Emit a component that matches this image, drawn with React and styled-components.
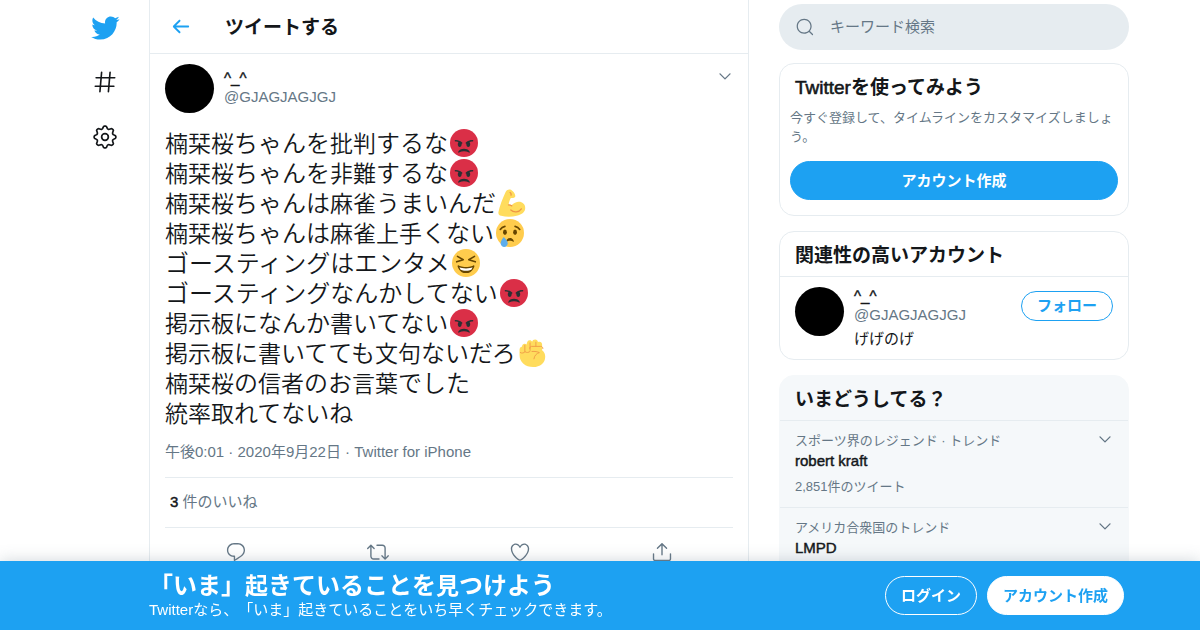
import React from "react";
import styled, { createGlobalStyle, css } from "styled-components";

const BLUE = "#1da1f2";
const INK = "#14171a";
const GREY = "#657786";
const LINE = "#e6ecf0";

const GlobalStyle = createGlobalStyle`
  *, *::before, *::after { box-sizing: border-box; }
  body {
    margin: 0;
    background: #fff;
    color: ${INK};
    font-family: "Liberation Sans", "Noto Sans CJK JP", sans-serif;
    font-size: 15px;
    line-height: 20px;
    text-spacing-trim: space-all;
  }
  h1, h2, p, ul { margin: 0; padding: 0; }
  ul { list-style: none; }
  button, input { font: inherit; }
  button { cursor: pointer; }
  a { color: inherit; text-decoration: none; }
`;

const strong = css`
  font-weight: 400;
  -webkit-text-stroke: 0.03em currentColor;
`;

/* ---------- icons ---------- */

const Svg = styled.svg`
  display: block;
  flex: none;
  width: ${(p) => p.$size}px;
  height: ${(p) => p.$size}px;
  fill: currentColor;
`;

const PATHS = {
  bird: "M23.643 4.937c-.835.37-1.732.62-2.675.733.962-.576 1.7-1.49 2.048-2.578-.9.534-1.897.922-2.958 1.13-.85-.904-2.06-1.47-3.4-1.47-2.572 0-4.658 2.086-4.658 4.66 0 .364.042.718.12 1.06-3.873-.195-7.304-2.05-9.602-4.868-.4.69-.63 1.49-.63 2.342 0 1.616.823 3.043 2.072 3.878-.764-.025-1.482-.234-2.11-.583v.06c0 2.257 1.605 4.14 3.737 4.568-.392.106-.803.162-1.227.162-.3 0-.593-.028-.877-.082.593 1.85 2.313 3.198 4.352 3.234-1.595 1.25-3.604 1.995-5.786 1.995-.376 0-.747-.022-1.112-.065 2.062 1.323 4.51 2.093 7.14 2.093 8.57 0 13.255-7.098 13.255-13.254 0-.2-.005-.402-.014-.602.91-.658 1.7-1.477 2.323-2.41z",
  back: "M20 11H7.414l4.293-4.293c.39-.39.39-1.023 0-1.414s-1.023-.39-1.414 0l-6 6c-.39.39-.39 1.023 0 1.414l6 6c.195.195.45.293.707.293s.512-.098.707-.293c.39-.39.39-1.023 0-1.414L7.414 13H20c.553 0 1-.447 1-1s-.447-1-1-1z",
  hash: "M21 7.337h-3.93l.372-4.272c.036-.412-.27-.775-.682-.812-.417-.03-.776.27-.812.683l-.383 4.4h-6.32l.37-4.27c.037-.413-.27-.776-.68-.813-.42-.03-.777.27-.813.683l-.382 4.4H3.782c-.414 0-.75.337-.75.75s.336.75.75.75H7.61l-.55 6.327H3c-.414 0-.75.336-.75.75s.336.75.75.75h3.93l-.372 4.272c-.036.412.27.775.682.812l.066.003c.385 0 .712-.295.746-.686l.383-4.4h6.32l-.37 4.27c-.036.413.27.776.682.813l.066.003c.385 0 .712-.295.746-.686l.382-4.4h3.957c.413 0 .75-.337.75-.75s-.337-.75-.75-.75H16.39l.55-6.327H21c.414 0 .75-.336.75-.75s-.336-.75-.75-.75zm-6.115 7.826h-6.32l.55-6.326h6.32l-.55 6.326z",
  reply: "M14.046 2.242l-4.148-.01h-.002c-4.374 0-7.8 3.427-7.8 7.802 0 4.098 3.186 7.206 7.465 7.37v3.828c0 .108.044.286.12.403.142.225.384.347.632.347.138 0 .277-.038.402-.118.264-.168 6.473-4.14 8.088-5.506 1.902-1.61 3.04-3.97 3.043-6.312v-.017c-.006-4.367-3.43-7.787-7.8-7.788zm3.787 12.972c-1.134.96-4.862 3.405-6.772 4.643V16.67c0-.414-.335-.75-.75-.75h-.396c-3.66 0-6.318-2.476-6.318-5.886 0-3.534 2.768-6.302 6.3-6.302l4.147.01h.002c3.532 0 6.3 2.766 6.302 6.296-.003 1.91-.942 3.844-2.514 5.176z",
  retweet: "M23.77 15.67c-.292-.293-.767-.293-1.06 0l-2.22 2.22V7.65c0-2.068-1.683-3.75-3.75-3.75h-5.85c-.414 0-.75.336-.75.75s.336.75.75.75h5.85c1.24 0 2.25 1.01 2.25 2.25v10.24l-2.22-2.22c-.293-.293-.768-.293-1.06 0s-.294.768 0 1.06l3.5 3.5c.145.147.337.22.53.22s.383-.072.53-.22l3.5-3.5c.294-.292.294-.767 0-1.06zm-10.66 3.28H7.26c-1.24 0-2.25-1.01-2.25-2.25V6.46l2.22 2.22c.148.147.34.22.532.22s.384-.073.53-.22c.293-.293.293-.768 0-1.06l-3.5-3.5c-.293-.294-.768-.294-1.06 0l-3.5 3.5c-.294.292-.294.767 0 1.06s.767.293 1.06 0l2.22-2.22V16.7c0 2.068 1.683 3.75 3.75 3.75h5.85c.414 0 .75-.336.75-.75s-.337-.75-.75-.75z",
  like: "M12 21.638h-.014C9.403 21.59 1.95 14.856 1.95 8.478c0-3.064 2.525-5.754 5.403-5.754 2.29 0 3.83 1.58 4.646 2.73.814-1.148 2.354-2.73 4.645-2.73 2.88 0 5.404 2.69 5.404 5.755 0 6.376-7.454 13.11-10.037 13.157H12zM7.354 4.225c-2.08 0-3.903 1.988-3.903 4.255 0 5.74 7.034 11.596 8.55 11.658 1.518-.062 8.55-5.917 8.55-11.658 0-2.267-1.823-4.255-3.903-4.255-2.528 0-3.94 2.936-3.952 2.965-.23.562-1.156.562-1.387 0-.014-.03-1.425-2.965-3.954-2.965z",
  share: "M17.53 7.47l-5-5c-.293-.293-.768-.293-1.06 0l-5 5c-.294.293-.294.768 0 1.06s.767.294 1.06 0l3.72-3.72V15c0 .414.336.75.75.75s.75-.336.75-.75V4.81l3.72 3.72c.146.147.338.22.53.22s.384-.072.53-.22c.293-.293.293-.767 0-1.06zM19.708 21.944H4.292C3.028 21.944 2 20.916 2 19.652V14c0-.414.336-.75.75-.75s.75.336.75.75v5.652c0 .437.355.792.792.792h15.416c.437 0 .792-.355.792-.792V14c0-.414.336-.75.75-.75s.75.336.75.75v5.652c0 1.264-1.028 2.292-2.292 2.292z",
  chevron: "M20.207 8.147c-.39-.39-1.023-.39-1.414 0L12 14.94 5.207 8.147c-.39-.39-1.023-.39-1.414 0-.39.39-.39 1.023 0 1.414l7.5 7.5c.195.196.45.294.707.294s.512-.098.707-.293l7.5-7.5c.39-.39.39-1.022 0-1.413z",
  search: "M21.53 20.47l-3.66-3.66C19.195 15.24 20 13.214 20 11c0-4.97-4.03-9-9-9s-9 4.03-9 9 4.03 9 9 9c2.215 0 4.24-.804 5.808-2.13l3.66 3.66c.147.146.34.22.53.22s.385-.073.53-.22c.295-.293.295-.767.002-1.06zM3.5 11c0-4.135 3.365-7.5 7.5-7.5s7.5 3.365 7.5 7.5-3.365 7.5-7.5 7.5-7.5-3.365-7.5-7.5z",
};

const Icon = ({ name, size }) => (
  <Svg viewBox="0 0 24 24" $size={size} aria-hidden="true">
    <path d={PATHS[name]} />
  </Svg>
);

const polar = (deg, r) => {
  const a = (deg * Math.PI) / 180;
  return `${(12 + r * Math.sin(a)).toFixed(2)} ${(12 - r * Math.cos(a)).toFixed(2)}`;
};

/* Eight rounded teeth, one every 45 degrees. */
const COG = Array.from({ length: 8 }, (_, i) => {
  const c = i * 45;
  return `${i ? "L" : "M"}${polar(c - 12, 8.7)}Q${polar(c - 9, 10)} ${polar(c - 4, 10)}L${polar(c + 4, 10)}Q${polar(c + 9, 10)} ${polar(c + 12, 8.7)}Q${polar(c + 22.5, 6.8)} ${polar(c + 33, 8.7)}`;
}).join("") + "Z";

const GearIcon = ({ size }) => (
  <Svg viewBox="0 0 24 24" $size={size} aria-hidden="true">
    <g fill="none" stroke="currentColor" strokeWidth="1.6" strokeLinejoin="round">
      <path d={COG} />
      <circle cx="12" cy="12" r="3.1" />
    </g>
  </Svg>
);

/* ---------- emoji ---------- */

const EmojiSvg = styled.svg`
  display: inline-block;
  width: 28px;
  height: 28px;
  margin: 0 2px;
  vertical-align: -5px;
`;

const EMOJI = {
  angry: (
    <>
      <circle cx="18" cy="18" r="18" fill="#DA2F47" />
      <path
        fill="#292F33"
        d="M25.485 29.879C25.44 29.7 24.317 25.5 18 25.5c-6.318 0-7.44 4.2-7.485 4.379-.055.217.043.442.237.554.195.109.439.079.6-.077.019-.019 1.954-1.856 6.648-1.856s6.63 1.837 6.648 1.855c.096.095.224.145.352.145.084 0 .169-.021.246-.064.196-.112.294-.339.239-.557zm-9.778-12.586C12.452 14.038 7.221 14 7 14c-.552 0-.999.447-.999.998-.001.552.446 1 .998 1.002.029 0 1.925.022 3.983.737-.593.64-.982 1.634-.982 2.763 0 1.934 1.119 3.5 2.5 3.5s2.5-1.566 2.5-3.5c0-.174-.019-.34-.037-.507.013 0 .025.007.037.007.256 0 .512-.098.707-.293.391-.391.391-1.023 0-1.414zM29 14c-.221 0-5.451.038-8.707 3.293-.391.391-.391 1.023 0 1.414.195.195.451.293.707.293.013 0 .024-.007.036-.007-.016.167-.036.333-.036.507 0 1.934 1.119 3.5 2.5 3.5s2.5-1.566 2.5-3.5c0-1.129-.389-2.123-.982-2.763 2.058-.715 3.954-.737 3.984-.737.551-.002.998-.45.997-1.002-.001-.551-.447-.998-.999-.998z"
      />
    </>
  ),
  muscle: (
    <>
      <path
        fill="#FFDC5D"
        d="M15.500.8C12.500.500 10.500 2 9.500 4.500 6 12 2 22 .500 30c-.2 2.500 1 4 3.500 4.500 6 1.500 14 1.500 20 0 7-1.500 11-5 11-10 0-5.500-4.500-8.500-9-8-3.500.500-6.500 2-8.500 4.500-1-.5-2.500-1-4-.5.500-3.500 1.500-6.500 3-9 2 .5 5 0 5.700-2 .6-2.500-3.200-8-6.700-8.700z"
      />
      <path fill="none" stroke="#EF9645" strokeWidth="1.600" strokeLinecap="round" d="M16.500 27c3.500 3.500 10.500 3.300 13.500-1.500M13.500 20.500c1.500-.1 2.900.3 4.200 1.200M15.500 4.500c1.300.8 1.700 1.900 1.200 3.500" />
    </>
  ),
  cry: (
    <>
      <circle cx="18" cy="18" r="18" fill="#FFCC4D" />
      <g fill="#664500">
        <ellipse cx="11.500" cy="17" rx="2.500" ry="3.500" />
        <ellipse cx="24.500" cy="17" rx="2.500" ry="3.500" />
        <path d="M13.100 28.700C13.200 28.200 14.200 24.500 18 24.500s4.800 3.700 4.900 4.200c.1.600-.5.900-.9.500-1-.9-2.200-1.200-4-1.200s-3 .3-4 1.200c-.4.400-1 .1-.9-.5z" />
      </g>
      <path fill="none" stroke="#664500" strokeWidth="2" strokeLinecap="round" d="M5.500 13.500c1.300-2.200 3.300-3.600 6-4M30.500 13.500c-1.300-2.200-3.300-3.600-6-4" />
      <path fill="#5DADEC" d="M10 23c-2.500 3-4 5.500-4 8.300C6 34 7.800 36 10.500 36S15 34 15 31.300C15 28.500 13 26 10 23z" />
    </>
  ),
  laugh: (
    <>
      <circle cx="18" cy="18" r="18" fill="#FFCC4D" />
      <path fill="#664500" d="M28.500 21.200c-.3-.3-.7-.3-1-.1-.1 0-3.500 1.900-9.500 1.900s-9.400-1.900-9.500-1.900c-.3-.2-.7-.2-1 .1-.3.200-.4.600-.3.900C7.300 22.500 9.400 31 18 31s10.700-8.500 10.800-8.900c.1-.3 0-.7-.3-.9z" />
      <path fill="#fff" d="M9.600 23.500c1.600.7 4.500 1.500 8.400 1.500s6.800-.8 8.400-1.500c-.3 1.200-.9 2.300-1.600 3.200C23.500 27.300 21 28 18 28s-5.500-.7-6.800-1.300c-.7-.9-1.300-2-1.600-3.200z" />
      <path fill="none" stroke="#664500" strokeWidth="2" strokeLinecap="round" strokeLinejoin="round" d="M7 9.500l7.500 4.300L6 16.500M29 9.500l-7.500 4.300 8.500 2.700" />
    </>
  ),
  fist: (
    <>
      <path fill="#FFDC5D" d="M2 14c0-2 1-4 3-4 .4-2.400 1.600-4 3.600-4 1.200 0 2 .5 2.500 1.200C11.300 3.800 12.600 1.500 15 1.500c1.700 0 2.700.9 3.200 2C18.800 1.600 20 .5 22 .5c2.200 0 3.600 1.500 3.700 3.500.5-.3 1.200-.5 1.900-.5 2 0 3.400 1.500 3.400 3.600v7.400c2.600 2.100 4 4.900 4 8.200C35 30.500 28.500 36 19.500 36 9.500 36 2 30 2 20.500V14z" />
      <path fill="none" stroke="#EF9645" strokeWidth="1.100" strokeLinecap="round" strokeLinejoin="round" d="M3 17.500c2 1.200 4.600.6 6-1.200 2 1.500 4.700 1.300 6.500-.3M8.800 16V8M15.500 14.500V5M15 12c0-1.500 1-2.500 2.500-2.500H29c2 0 3 1 3 2.800M23 9V4M18 16c4-.3 7 .3 9.500 1.500-3.500.8-6.500 3.700-7 8" />
    </>
  ),
};

const Emoji = ({ name, label }) => (
  <EmojiSvg viewBox="0 0 36 36" role="img" aria-label={label}>
    {EMOJI[name]}
  </EmojiSvg>
);

/* ---------- page frame ---------- */

const Page = styled.div`
  display: flex;
  align-items: flex-start;
  max-width: 1058px;
  margin: 0 auto;
  height: 100vh;
  overflow: hidden;
`;

const SideNav = styled.nav`
  flex: none;
  width: 78px;
  padding: 13px 10px 0 0;
  display: flex;
  flex-direction: column;
  align-items: center;
  gap: 28px;
`;

const NavLink = styled.a`
  display: grid;
  place-items: center;
  height: 27px;
  color: ${(p) => (p.$brand ? BLUE : INK)};
`;

const Main = styled.main`
  flex: 0 1 600px;
  min-width: 0;
  min-height: 100vh;
  border: solid ${LINE};
  border-width: 0 1px;
`;

const Side = styled.aside`
  flex: 0 0 350px;
  margin-left: 30px;
  padding-top: 4px;
`;

const TopBar = styled.header`
  display: flex;
  align-items: center;
  gap: 33px;
  height: 54px;
  padding: 0 19px;
  border-bottom: 1px solid ${LINE};
`;

const IconButton = styled.button`
  display: grid;
  place-items: center;
  padding: 0;
  border: 0;
  background: none;
  color: ${(p) => (p.$accent ? BLUE : GREY)};
`;

const PageTitle = styled.h1`
  padding-top: 2px;
  font-size: 19px;
  line-height: 26px;
  font-weight: 700;
`;

/* ---------- tweet ---------- */

const Tweet = styled.article`
  padding: 10px 15px;
`;

const Author = styled.div`
  display: flex;
  align-items: flex-start;
  gap: 10px;
`;

const Avatar = styled.div`
  flex: none;
  width: 49px;
  height: 49px;
  border-radius: 50%;
  background: #000;
`;

const Names = styled.div`
  flex: 1;
  min-width: 0;
  padding-top: ${(p) => (p.$offset ? 5 : 0)}px;
`;

const Name = styled.a`
  display: block;
  line-height: 18px;
  ${strong}
`;

const Handle = styled.div`
  color: ${GREY};
  line-height: 19px;
`;

const SideSlot = styled.div`
  padding-top: 4px;
`;

const Body = styled.div`
  margin-top: 16px;
  font-size: 24px;
  line-height: 30px;
  font-weight: 350;
`;

const BodyLine = styled.p`
  height: 30px;
  white-space: nowrap;
`;

const Han = styled.span`
  font-size: 23px;
`;

const Meta = styled.div`
  padding: 13px 0 15px;
  color: ${GREY};
  border-bottom: 1px solid ${LINE};
`;

const Likes = styled.div`
  padding: 14px 5px 15px;
  color: ${GREY};
  border-bottom: 1px solid ${LINE};
`;

const Count = styled.span`
  color: ${INK};
  ${strong}
`;

const Actions = styled.div`
  display: grid;
  grid-template-columns: repeat(4, 1fr);
  align-items: center;
  height: 48px;
`;

/* ---------- right column ---------- */

const SearchBox = styled.label`
  display: flex;
  align-items: center;
  gap: 15px;
  height: 46px;
  padding: 0 16px;
  border-radius: 23px;
  background: ${LINE};
  color: ${GREY};
`;

const SearchInput = styled.input`
  flex: 1;
  min-width: 0;
  padding: 0;
  border: 0;
  outline: 0;
  background: none;
  color: ${INK};
  &::placeholder { color: ${GREY}; opacity: 1; }
`;

const Card = styled.section`
  margin-top: ${(p) => (p.$first ? 13 : 15)}px;
  border: 1px solid ${(p) => (p.$filled ? "#f5f8fa" : LINE)};
  border-radius: 15px;
  background: ${(p) => (p.$filled ? "#f5f8fa" : "#fff")};
  overflow: hidden;
`;

const CardTitle = styled.h2`
  padding: 11px 15px 8px;
  font-size: 19px;
  line-height: 25px;
  font-weight: 700;
  border-bottom: ${(p) => (p.$plain ? "0" : `1px solid ${LINE}`)};
`;

const Latin = styled.span`
  ${strong}
`;

const SignupBody = styled.div`
  padding: 0 10px 15px;
`;

const SignupText = styled.p`
  margin-bottom: 15px;
  color: ${GREY};
  font-size: 13px;
  line-height: 19px;
`;

const Pill = styled.button`
  display: ${(p) => (p.$wide ? "block" : "inline-block")};
  width: ${(p) => (p.$wide ? "100%" : "auto")};
  height: ${(p) => (p.$small ? 30 : 39)}px;
  padding: 0 15px;
  border: 1px solid ${(p) => p.$line};
  border-radius: 20px;
  background: ${(p) => p.$fill};
  color: ${(p) => p.$ink};
  font-weight: 700;
  line-height: 20px;
  white-space: nowrap;
`;

const Account = styled.div`
  display: flex;
  gap: 10px;
  padding: 10px 15px;
`;

const Bio = styled.p`
  margin-top: 5px;
`;

const Trend = styled.li`
  display: flex;
  justify-content: space-between;
  align-items: flex-start;
  padding: 10px 15px;
  border-bottom: 1px solid ${LINE};
`;

const TrendNote = styled.div`
  color: ${GREY};
  font-size: 13px;
  line-height: 20px;
`;

const TrendName = styled.a`
  display: block;
  margin-bottom: 6px;
  ${strong}
`;

/* ---------- bottom banner ---------- */

const Banner = styled.div`
  position: fixed;
  inset: auto 0 0 0;
  background: ${BLUE};
  color: #fff;
  box-shadow: 0 0 15px rgba(101, 119, 134, 0.3);
`;

const BannerInner = styled.div`
  display: flex;
  align-items: center;
  justify-content: space-between;
  max-width: 1058px;
  height: 69px;
  margin: 0 auto;
  padding: 0 5px 0 78px;
`;

const BannerTitle = styled.p`
  font-size: 24px;
  line-height: 28px;
  font-weight: 700;
`;

const BannerButtons = styled.div`
  display: flex;
  gap: 10px;
`;

/* ---------- content ---------- */

const LINES = [
  ["楠栞桜ちゃんを批判するな", "angry", "怒り"],
  ["楠栞桜ちゃんを非難するな", "angry", "怒り"],
  ["楠栞桜ちゃんは麻雀うまいんだ", "muscle", "力こぶ"],
  ["楠栞桜ちゃんは麻雀上手くない", "cry", "泣き顔"],
  ["ゴースティングはエンタメ", "laugh", "笑い"],
  ["ゴースティングなんかしてない", "angry", "怒り"],
  ["掲示板になんか書いてない", "angry", "怒り"],
  ["掲示板に書いてても文句ないだろ", "fist", "握りこぶし"],
  ["楠栞桜の信者のお言葉でした"],
  ["統率取れてないね"],
];

const TRENDS = [
  { topic: "スポーツ界のレジェンド · トレンド", name: "robert kraft", count: "2,851件のツイート" },
  { topic: "アメリカ合衆国のトレンド", name: "LMPD", count: "1.2万件のツイート" },
];

const ACTIONS = [
  ["reply", "返信"],
  ["retweet", "リツイート"],
  ["like", "いいね"],
  ["share", "共有"],
];

/* Kanji are set one size below the kana around them. */
const mixed = (text) =>
  text
    .split(/([\u4e00-\u9fff]+)/)
    .filter(Boolean)
    .map((part, i) => (/[\u4e00-\u9fff]/.test(part) ? <Han key={i}>{part}</Han> : part));

export default function App() {
  return (
    <>
      <GlobalStyle />
      <Page>
        <SideNav>
          <NavLink href="#home" $brand aria-label="Twitter"><Icon name="bird" size={30} /></NavLink>
          <NavLink href="#explore" aria-label="話題を検索"><Icon name="hash" size={26} /></NavLink>
          <NavLink href="#settings" aria-label="設定"><GearIcon size={26} /></NavLink>
        </SideNav>

        <Main>
          <TopBar>
            <IconButton $accent aria-label="戻る"><Icon name="back" size={23} /></IconButton>
            <PageTitle>ツイートする</PageTitle>
          </TopBar>
          <Tweet>
            <Author>
              <Avatar />
              <Names $offset>
                <Name href="#user">^_^</Name>
                <Handle>@GJAGJAGJGJ</Handle>
              </Names>
              <SideSlot>
                <IconButton aria-label="もっと見る"><Icon name="chevron" size={16} /></IconButton>
              </SideSlot>
            </Author>
            <Body lang="ja">
              {LINES.map(([text, emoji, label]) => (
                <BodyLine key={text}>
                  {mixed(text)}
                  {emoji && <Emoji name={emoji} label={label} />}
                </BodyLine>
              ))}
            </Body>
            <Meta>午後0:01 · 2020年9月22日 · Twitter for iPhone</Meta>
            <Likes><Count>3</Count> 件のいいね</Likes>
            <Actions>
              {ACTIONS.map(([name, label]) => (
                <IconButton key={name} aria-label={label}><Icon name={name} size={22} /></IconButton>
              ))}
            </Actions>
          </Tweet>
        </Main>

        <Side>
          <SearchBox>
            <Icon name="search" size={20} />
            <SearchInput type="text" placeholder="キーワード検索" aria-label="キーワード検索" />
          </SearchBox>

          <Card $first>
            <CardTitle $plain><Latin>Twitter</Latin>を使ってみよう</CardTitle>
            <SignupBody>
              <SignupText>今すぐ登録して、タイムラインをカスタマイズしましょう。</SignupText>
              <Pill $wide $fill={BLUE} $line={BLUE} $ink="#fff">アカウント作成</Pill>
            </SignupBody>
          </Card>

          <Card>
            <CardTitle>関連性の高いアカウント</CardTitle>
            <Account>
              <Avatar />
              <Names>
                <Name href="#user">^_^</Name>
                <Handle>@GJAGJAGJGJ</Handle>
                <Bio>げげのげ</Bio>
              </Names>
              <SideSlot>
                <Pill $small $fill="transparent" $line={BLUE} $ink={BLUE}>フォロー</Pill>
              </SideSlot>
            </Account>
          </Card>

          <Card $filled>
            <CardTitle>いまどうしてる？</CardTitle>
            <ul>
              {TRENDS.map((t) => (
                <Trend key={t.name}>
                  <div>
                    <TrendNote>{t.topic}</TrendNote>
                    <TrendName href="#trend">{t.name}</TrendName>
                    <TrendNote>{t.count}</TrendNote>
                  </div>
                  <IconButton aria-label="もっと見る"><Icon name="chevron" size={16} /></IconButton>
                </Trend>
              ))}
            </ul>
          </Card>
        </Side>
      </Page>

      <Banner>
        <BannerInner>
          <div>
            <BannerTitle>{mixed("「いま」起きていることを見つけよう")}</BannerTitle>
            <p>Twitterなら、「いま」起きていることをいち早くチェックできます。</p>
          </div>
          <BannerButtons>
            <Pill $fill="transparent" $line="#fff" $ink="#fff">ログイン</Pill>
            <Pill $fill="#fff" $line="#fff" $ink={BLUE}>アカウント作成</Pill>
          </BannerButtons>
        </BannerInner>
      </Banner>
    </>
  );
}
